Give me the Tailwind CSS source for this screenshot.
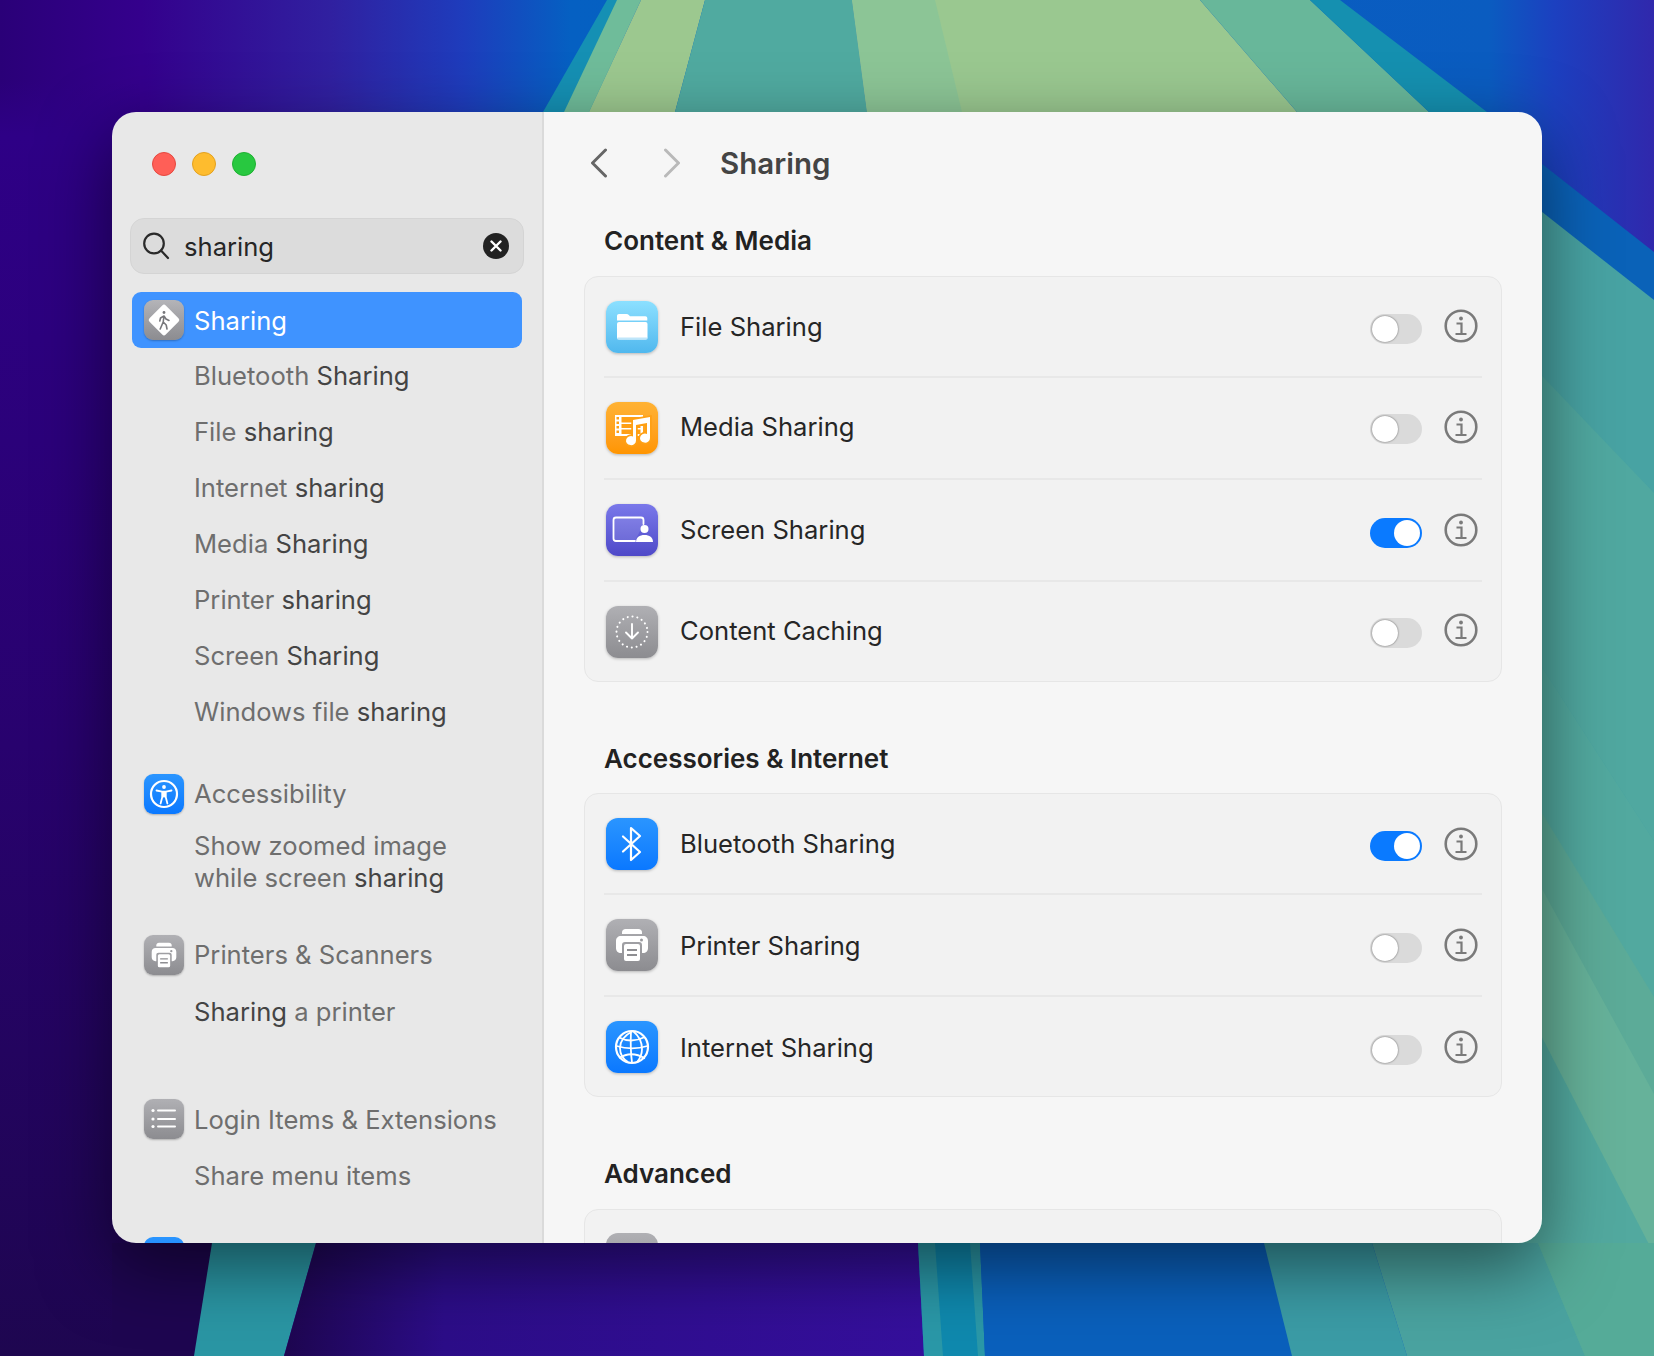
<!DOCTYPE html>
<html lang="en">
<head>
  <meta charset="UTF-8" />
  <title>Sharing</title>
  <script src="https://cdn.jsdelivr.net/npm/@tailwindcss/browser@4"></script>
</head>
<body class="font-['Inter','Noto_Sans',sans-serif] antialiased">
  <div class="relative w-[1654px] h-[1356px] overflow-hidden pt-[112px] pl-[112px]">

    <!-- wallpaper -->
    <svg class="absolute inset-0" width="1654" height="1356" viewBox="0 0 1654 1356">
      <defs>
        <linearGradient id="sky" x1="0" y1="0" x2="1" y2="0">
          <stop offset="0" stop-color="#2a0078"/>
          <stop offset=".085" stop-color="#34008c"/>
          <stop offset=".2" stop-color="#3020a0"/>
          <stop offset=".28" stop-color="#1e3cbc"/>
          <stop offset=".345" stop-color="#0560c2"/>
          <stop offset=".9" stop-color="#0a5cc0"/>
          <stop offset=".94" stop-color="#1c40c0"/>
          <stop offset="1" stop-color="#3028ac"/>
        </linearGradient>
        <linearGradient id="left" x1="0" y1="0" x2="0" y2="1">
          <stop offset=".06" stop-color="#2e0086" stop-opacity="0"/>
          <stop offset=".1" stop-color="#2e0086"/>
          <stop offset=".55" stop-color="#28026e"/>
          <stop offset="1" stop-color="#1e0650"/>
        </linearGradient>
        <linearGradient id="purple" x1="0" y1="0" x2="1" y2="0">
          <stop offset="0" stop-color="#1e0650"/>
          <stop offset=".25" stop-color="#2c0d88"/>
          <stop offset="1" stop-color="#350f9c"/>
        </linearGradient>
      </defs>
      <rect width="1654" height="1356" fill="url(#sky)"/>
      <rect width="140" height="1356" fill="url(#left)"/>
      <rect x="112" y="1243" width="104" height="113" fill="#1e0650"/>

      <!-- top ribbons -->
      <polygon points="607,0 640,0 590,112 543,112" fill="#1590b4"/>
      <polygon points="617,0 641,0 589,112 564,112" fill="#6fbc9a"/>
      <polygon points="641,0 705,0 675,112 589,112" fill="#9cc88f"/>
      <polygon points="705,0 852,0 867,112 675,112" fill="#50aaa0"/>
      <polygon points="852,0 1200,0 1297,112 867,112" fill="#9ac890"/>
      <polygon points="852,0 935,0 962,112 867,112" fill="#8cc596"/>
      <polygon points="1200,0 1310,0 1429,112 1297,112" fill="#68b79a"/>
      <polygon points="1310,0 1340,0 1487,112 1429,112" fill="#1590b0"/>

      <!-- right side -->
      <polygon points="1500,131 1654,252 1654,1356 1500,1356" fill="#0a62b8"/>
      <polygon points="1500,179 1654,300 1654,1356 1500,1356" fill="#48a3a3"/>
      <polygon points="1500,332 1654,493 1654,1356 1500,1356" fill="#50a8a0"/>
      <polygon points="1500,602 1654,841 1654,1356 1500,1356" fill="#48a3a3"/>
      <polygon points="1500,602 1654,841 1654,1000 1500,748" fill="#52a99f"/>
      <polygon points="1500,744 1654,997 1654,1356 1500,1356" fill="#5cab98"/>
      <polygon points="1500,812 1654,1094 1654,1356 1500,1356" fill="#66b29a"/>
      <polygon points="1500,956 1654,1254 1654,1356 1500,1356" fill="#52a99f"/>

      <!-- bottom ribbons -->
      <polygon points="212,1243 316,1243 284,1356 194,1356" fill="#2a96a4"/>
      <polygon points="316,1243 918,1243 924,1356 284,1356" fill="url(#purple)"/>
      <polygon points="918,1243 980,1243 985,1356 924,1356" fill="#2a98a8"/>
      <polygon points="935,1243 970,1243 978,1356 943,1356" fill="#0f89ae"/>
      <polygon points="980,1243 1264,1243 1292,1356 985,1356" fill="#0a60bc"/>
      <polygon points="1264,1243 1372,1243 1407,1356 1292,1356" fill="#3b9ca6"/>
      <polygon points="1372,1243 1538,1243 1585,1356 1407,1356" fill="#4aa3a0"/>
      <polygon points="1538,1243 1654,1243 1654,1356 1585,1356" fill="#55ab98"/>
    </svg>

    <!-- window -->
    <div class="relative w-[1430px] h-[1131px] rounded-[24px] overflow-hidden flex shadow-[0_24px_70px_rgba(0,0,0,0.5)]">

      <!-- sidebar -->
      <aside class="w-[432px] shrink-0 h-full bg-[#e8e8e8] border-r-2 border-[#dadada] overflow-hidden">
        <div class="flex gap-[16px] pt-[40px] pl-[40px]">
          <span class="w-[24px] h-[24px] rounded-full bg-[#ff5f57] border border-[#e5483f]"></span>
          <span class="w-[24px] h-[24px] rounded-full bg-[#febc2e] border border-[#e3a11f]"></span>
          <span class="w-[24px] h-[24px] rounded-full bg-[#28c840] border border-[#1fb032]"></span>
        </div>

        <div class="mt-[42px] ml-[18px] w-[394px] h-[56px] rounded-[14px] bg-[#dcdcdc] border border-[#d4d4d4] flex items-center pl-[11px] pr-[14px]">
          <svg width="28" height="28" viewBox="0 0 28 28" fill="none" stroke="#2a2a2a" stroke-width="2.2" stroke-linecap="round">
            <circle cx="12" cy="11.5" r="9.8"/><path d="M19 18.5l7 7.5"/>
          </svg>
          <span class="ml-[14px] mt-[2px] text-[25.6px] leading-[32px] text-[#262626]">sharing</span>
          <span class="ml-auto w-[26px] h-[26px] rounded-full bg-[#222] flex items-center justify-center">
            <svg width="12" height="12" viewBox="0 0 12 12" stroke="#fff" stroke-width="2.4" stroke-linecap="round"><path d="M1.5 1.5l9 9M10.5 1.5l-9 9"/></svg>
          </span>
        </div>

        <div class="mt-[18px] mx-[20px] h-[56px] w-[390px] rounded-[9px] bg-[#3f93ff] flex items-center pl-[12px] text-[25.6px] text-white">
          <div class="w-[40px] h-[40px] rounded-[9px] bg-linear-to-b from-[#b4b4b8] to-[#8c8c90] shadow-[0_1px_2px_rgba(0,0,0,0.25)]">
            <svg width="40" height="40" viewBox="0 0 40 40">
              <rect x="8.5" y="8.5" width="23" height="23" rx="2.5" fill="#fff" transform="rotate(45 20 20)"/>
              <g stroke="#77777b" stroke-width="1.6" fill="none" stroke-linecap="round" stroke-linejoin="round">
                <circle cx="20" cy="12.5" r="1.4" fill="#77777b" stroke="none"/>
                <path d="M20 16l-.8 6 3 3 .8 4M19.2 22l-3 7M20 16l-3.5 2-.7 3M20 16l2 3 3 1.5"/>
              </g>
            </svg>
          </div>
          <span class="ml-[10px] mt-[2px]">Sharing</span>
        </div>

        <div class="ml-[82px] text-[25.6px] text-[#6e6e6e]">
          <div class="h-[56px] leading-[56px]">Bluetooth <span class="text-[#444]">Sharing</span></div>
          <div class="h-[56px] leading-[56px]">File <span class="text-[#444]">sharing</span></div>
          <div class="h-[56px] leading-[56px]">Internet <span class="text-[#444]">sharing</span></div>
          <div class="h-[56px] leading-[56px]">Media <span class="text-[#444]">Sharing</span></div>
          <div class="h-[56px] leading-[56px]">Printer <span class="text-[#444]">sharing</span></div>
          <div class="h-[56px] leading-[56px]">Screen <span class="text-[#444]">Sharing</span></div>
          <div class="h-[56px] leading-[56px]">Windows file <span class="text-[#444]">sharing</span></div>
        </div>

        <div class="mt-[34px] ml-[32px] flex items-center gap-[10px] h-[40px] text-[25.6px] text-[#6e6e6e]">
          <div class="w-[40px] h-[40px] rounded-[9px] bg-linear-to-b from-[#2a95ff] to-[#0a78ff] shadow-[0_1px_2px_rgba(0,0,0,0.25)]">
            <svg width="40" height="40" viewBox="0 0 40 40" fill="none" stroke="#fff" stroke-linecap="round" stroke-linejoin="round">
              <circle cx="20" cy="20" r="13" stroke-width="2.2"/>
              <circle cx="20" cy="13" r="1.9" fill="#fff" stroke="none"/>
              <path d="M12.5 16.5l5.5 1.2h4l5.5-1.2M20 17.7v5M18.2 18v5.3l-1.6 6.2M21.8 18v5.3l1.6 6.2" stroke-width="1.8"/>
            </svg>
          </div>
          <span>Accessibility</span>
        </div>
        <div class="mt-[16px] ml-[82px] text-[25.6px] leading-[32px] text-[#6e6e6e]">
          Show zoomed image<br>while screen <span class="text-[#444]">sharing</span>
        </div>

        <div class="mt-[41px] ml-[32px] flex items-center gap-[10px] h-[40px] text-[25.6px] text-[#6e6e6e]">
          <div class="w-[40px] h-[40px] rounded-[9px] bg-linear-to-b from-[#b0b0b4] to-[#8c8c90] shadow-[0_1px_2px_rgba(0,0,0,0.25)]">
            <svg width="40" height="40" viewBox="0 0 52 52">
              <path d="M16 15v-1.5c0-2 1.5-3.5 3.5-3.5h13c2 0 3.5 1.5 3.500 3.500V15z" fill="#fff"/>
              <path d="M15 17h22c3 0 5 2 5 5v7c0 3-2 5-5 5h-1v-8c0-2-1-3-3-3H19c-2 0-3 1-3 3v8h-1c-3 0-5-2-5-5v-7c0-3 2-5 5-5z" fill="#fff"/>
              <circle cx="35.5" cy="21" r="1.5" fill="#9a9a9e"/>
              <rect x="18" y="25" width="16" height="17" rx="2" fill="#fff"/>
              <path d="M21 31h10M21 36h10" stroke="#8e8e92" stroke-width="1.8"/>
            </svg>
          </div>
          <span class="mt-[1px]">Printers &amp; Scanners</span>
        </div>
        <div class="mt-[9px] ml-[82px] h-[56px] leading-[56px] text-[25.6px] text-[#6e6e6e]"><span class="text-[#444]">Sharing</span> a printer</div>

        <div class="mt-[59px] ml-[32px] flex items-center gap-[10px] h-[40px] text-[25.6px] text-[#6e6e6e]">
          <div class="w-[40px] h-[40px] rounded-[9px] bg-linear-to-b from-[#b0b0b4] to-[#8c8c90] shadow-[0_1px_2px_rgba(0,0,0,0.25)]">
            <svg width="40" height="40" viewBox="0 0 40 40" fill="#fff">
              <circle cx="9" cy="11.5" r="1.6"/><circle cx="9" cy="20" r="1.6"/><circle cx="9" cy="27.5" r="1.6"/>
              <rect x="13" y="10.5" width="19" height="2" rx="1"/><rect x="13" y="19" width="19" height="2" rx="1"/><rect x="13" y="26.5" width="19" height="2" rx="1"/>
            </svg>
          </div>
          <span class="mt-[2px]">Login Items &amp; Extensions</span>
        </div>
        <div class="mt-[9px] ml-[82px] h-[56px] leading-[56px] text-[25.6px] text-[#6e6e6e]">Share menu items</div>
        <div class="mt-[33px] ml-[32px] w-[40px] h-[40px] rounded-[9px] bg-linear-to-b from-[#2a95ff] to-[#0a78ff]"></div>
      </aside>

      <!-- content -->
      <main class="flex-1 min-w-0 h-full bg-[#f6f6f6] overflow-hidden pl-[40px]">
        <div class="h-[113px] pt-[34px]">
          <div class="h-[34px] flex items-center">
            <svg class="ml-[6px]" width="18" height="30" viewBox="0 0 18 30" fill="none" stroke="#666" stroke-width="3" stroke-linecap="round" stroke-linejoin="round"><path d="M15.5 2L2.5 15l13 13"/></svg>
            <svg class="ml-[55px]" width="18" height="30" viewBox="0 0 18 30" fill="none" stroke="#b9b9b9" stroke-width="3" stroke-linecap="round" stroke-linejoin="round"><path d="M2.5 2l13 13-13 13"/></svg>
            <h1 class="ml-[39px] text-[29.5px] font-semibold text-[#444]">Sharing</h1>
          </div>
        </div>

        <h2 class="ml-[20px] h-[32px] leading-[32px] text-[26px] font-semibold text-[#222]">Content &amp; Media</h2>
        <div class="mt-[19px] w-[918px] rounded-[14px] bg-[#f2f2f2] border border-[#e6e6e6] text-[25.6px] text-[#262626]">
          <!-- file sharing -->
          <div class="h-[99px] flex items-center pl-[21px] pr-[23px]">
            <div class="w-[52px] h-[52px] rounded-[12px] bg-linear-to-b from-[#8ce0ff] to-[#50b8ee] shadow-[0_1px_3px_rgba(0,0,0,0.25)]">
              <svg width="52" height="52" viewBox="0 0 52 52">
                <path d="M11 19.5V15c0-1.2.8-2 2-2h7.500c1 0 1.700.4 2.300 1l1.200 1.200h15.300c1.200 0 2 .8 2 2v2.300z" fill="#fff"/>
                <rect x="11" y="21" width="30.5" height="17.5" rx="2" fill="#fff"/>
                <rect x="11" y="36.5" width="30.5" height="2" rx="1" fill="#bfe6fa"/>
              </svg>
            </div>
            <span class="ml-[22px] mt-[2px]">File Sharing</span>
            <div class="ml-auto mt-[4px] w-[52px] h-[30px] rounded-full bg-[#dadada] p-[2px] flex"><span class="w-[26px] h-[26px] rounded-full bg-white shadow-[0_0_2px_rgba(0,0,0,0.6)]"></span></div>
            <svg class="ml-[22px] -mt-[1px]" width="34" height="34" viewBox="0 0 34 34" fill="none" stroke="#7a7a7a"><circle cx="17" cy="17" r="15.3" stroke-width="2.600"/><circle cx="17" cy="9.500" r="1.900" fill="#7a7a7a" stroke="none"/><path d="M12.500 14.500h5v10M11.500 25h11" stroke-width="2.200"/></svg>
          </div>
          <div class="h-[2px] mx-[19px] bg-[#e8e8e8]"></div>
          <!-- media sharing -->
          <div class="h-[100px] flex items-center pl-[21px] pr-[23px]">
            <div class="w-[52px] h-[52px] rounded-[12px] bg-linear-to-b from-[#ffb233] to-[#ff9500] shadow-[0_1px_3px_rgba(0,0,0,0.25)]">
              <svg width="52" height="52" viewBox="0 0 52 52">
                <path d="M9 13h28v21H9z" fill="#fff"/>
                <g fill="#ff9f14">
                  <rect x="10.5" y="15" width="2.5" height="2.500"/><rect x="10.5" y="19.500" width="2.500" height="2.500"/><rect x="10.5" y="24" width="2.500" height="2.500"/><rect x="10.5" y="28.500" width="2.500" height="2.500"/>
                  <rect x="15.5" y="15" width="19" height="5.500"/><rect x="15.5" y="22" width="19" height="4"/><rect x="15.5" y="27.5" width="19" height="4.500"/>
                </g>
                <path d="M27 18l17-3v21a5 4.500 0 1 1-3-4V21l-11 2v15.500a5 4.500 0 1 1-3-4z" fill="#ffa014" stroke="#ffa014" stroke-width="3.500"/>
                <path d="M27 18l17-3v21a5 4.500 0 1 1-3-4V21l-11 2v15.500a5 4.500 0 1 1-3-4z" fill="#fff"/>
              </svg>
            </div>
            <span class="ml-[22px] mb-[2px]">Media Sharing</span>
            <div class="ml-auto mt-[2px] w-[52px] h-[30px] rounded-full bg-[#dadada] p-[2px] flex"><span class="w-[26px] h-[26px] rounded-full bg-white shadow-[0_0_2px_rgba(0,0,0,0.6)]"></span></div>
            <svg class="ml-[22px] -mt-[3px]" width="34" height="34" viewBox="0 0 34 34" fill="none" stroke="#7a7a7a"><circle cx="17" cy="17" r="15.3" stroke-width="2.600"/><circle cx="17" cy="9.500" r="1.900" fill="#7a7a7a" stroke="none"/><path d="M12.500 14.500h5v10M11.500 25h11" stroke-width="2.200"/></svg>
          </div>
          <div class="h-[2px] mx-[19px] bg-[#e8e8e8]"></div>
          <!-- screen sharing -->
          <div class="h-[100px] flex items-center pl-[21px] pr-[23px]">
            <div class="w-[52px] h-[52px] rounded-[12px] bg-linear-to-b from-[#7a78ea] to-[#4f49c8] shadow-[0_1px_3px_rgba(0,0,0,0.25)]">
              <svg width="52" height="52" viewBox="0 0 52 52">
                <path d="M29 37H10c-1.500 0-2.500-1-2.500-2.500V16c0-1.500 1-2.500 2.500-2.500h25c1.500 0 2.500 1 2.500 2.500v4" fill="#fff" fill-opacity=".12" stroke="#fff" stroke-width="1.800" stroke-linecap="round"/>
                <circle cx="38.5" cy="25" r="4" fill="#fff"/>
                <path d="M30 38c0-4.500 3.500-7 8.500-7s8.500 2.500 8.500 7z" fill="#fff"/>
              </svg>
            </div>
            <span class="ml-[22px]">Screen Sharing</span>
            <div class="ml-auto mt-[6px] w-[52px] h-[30px] rounded-full bg-[#0a7aff] p-[2px] flex justify-end"><span class="w-[26px] h-[26px] rounded-full bg-white"></span></div>
            <svg class="ml-[22px] -mt-[1px]" width="34" height="34" viewBox="0 0 34 34" fill="none" stroke="#7a7a7a"><circle cx="17" cy="17" r="15.3" stroke-width="2.600"/><circle cx="17" cy="9.500" r="1.900" fill="#7a7a7a" stroke="none"/><path d="M12.500 14.500h5v10M11.500 25h11" stroke-width="2.200"/></svg>
          </div>
          <div class="h-[2px] mx-[19px] bg-[#e8e8e8]"></div>
          <!-- content caching -->
          <div class="h-[99px] flex items-center pl-[21px] pr-[23px]">
            <div class="w-[52px] h-[52px] rounded-[12px] bg-linear-to-b from-[#b0b0b4] to-[#8c8c90] shadow-[0_1px_3px_rgba(0,0,0,0.25)]">
              <svg width="52" height="52" viewBox="0 0 52 52" fill="none" stroke="#fff" stroke-linecap="round" stroke-linejoin="round">
                <circle cx="26" cy="26" r="15.5" stroke-width="2" stroke-dasharray="0.1 4.77"/>
                <path d="M26 18v14.5M20 26.5l6 6 6-6" stroke-width="1.9"/>
              </svg>
            </div>
            <span class="ml-[22px]">Content Caching</span>
            <div class="ml-auto mt-[2px] w-[52px] h-[30px] rounded-full bg-[#dadada] p-[2px] flex"><span class="w-[26px] h-[26px] rounded-full bg-white shadow-[0_0_2px_rgba(0,0,0,0.6)]"></span></div>
            <svg class="ml-[22px] -mt-[3px]" width="34" height="34" viewBox="0 0 34 34" fill="none" stroke="#7a7a7a"><circle cx="17" cy="17" r="15.3" stroke-width="2.600"/><circle cx="17" cy="9.500" r="1.900" fill="#7a7a7a" stroke="none"/><path d="M12.500 14.500h5v10M11.500 25h11" stroke-width="2.200"/></svg>
          </div>
        </div>

        <h2 class="mt-[61px] ml-[20px] h-[32px] leading-[32px] text-[26px] font-semibold text-[#222]">Accessories &amp; Internet</h2>
        <div class="mt-[18px] w-[918px] rounded-[14px] bg-[#f2f2f2] border border-[#e6e6e6] text-[25.6px] text-[#262626]">
          <!-- bluetooth -->
          <div class="h-[99px] flex items-center pl-[21px] pr-[23px]">
            <div class="w-[52px] h-[52px] rounded-[12px] bg-linear-to-b from-[#2a95ff] to-[#0a78ff] shadow-[0_1px_3px_rgba(0,0,0,0.25)]">
              <svg width="52" height="52" viewBox="0 0 52 52" fill="none" stroke="#fff" stroke-width="2.2" stroke-linecap="round" stroke-linejoin="round">
                <path d="M17 18.5L34 34l-9 8V10l9 8-17 15.5"/>
              </svg>
            </div>
            <span class="ml-[22px] mt-[2px]">Bluetooth Sharing</span>
            <div class="ml-auto mt-[4px] w-[52px] h-[30px] rounded-full bg-[#0a7aff] p-[2px] flex justify-end"><span class="w-[26px] h-[26px] rounded-full bg-white"></span></div>
            <svg class="ml-[22px]" width="34" height="34" viewBox="0 0 34 34" fill="none" stroke="#7a7a7a"><circle cx="17" cy="17" r="15.3" stroke-width="2.600"/><circle cx="17" cy="9.500" r="1.900" fill="#7a7a7a" stroke="none"/><path d="M12.500 14.500h5v10M11.500 25h11" stroke-width="2.200"/></svg>
          </div>
          <div class="h-[2px] mx-[19px] bg-[#e8e8e8]"></div>
          <!-- printer -->
          <div class="h-[100px] flex items-center pl-[21px] pr-[23px]">
            <div class="w-[52px] h-[52px] rounded-[12px] bg-linear-to-b from-[#b0b0b4] to-[#8c8c90] shadow-[0_1px_3px_rgba(0,0,0,0.25)]">
              <svg width="52" height="52" viewBox="0 0 52 52">
                <path d="M16 15v-1.5c0-2 1.5-3.5 3.5-3.5h13c2 0 3.5 1.5 3.5 3.5V15z" fill="#fff"/>
                <path d="M15 17h22c3 0 5 2 5 5v7c0 3-2 5-5 5h-1v-8c0-2-1-3-3-3H19c-2 0-3 1-3 3v8h-1c-3 0-5-2-5-5v-7c0-3 2-5 5-5z" fill="#fff"/>
                <circle cx="35.5" cy="21" r="1.5" fill="#9a9a9e"/>
                <rect x="18" y="25" width="16" height="17" rx="2" fill="#fff"/>
                <path d="M21 31h10M21 36h10" stroke="#8e8e92" stroke-width="1.8"/>
              </svg>
            </div>
            <span class="ml-[22px] mt-[2px]">Printer Sharing</span>
            <div class="ml-auto mt-[5px] w-[52px] h-[30px] rounded-full bg-[#dadada] p-[2px] flex"><span class="w-[26px] h-[26px] rounded-full bg-white shadow-[0_0_2px_rgba(0,0,0,0.6)]"></span></div>
            <svg class="ml-[22px]" width="34" height="34" viewBox="0 0 34 34" fill="none" stroke="#7a7a7a"><circle cx="17" cy="17" r="15.3" stroke-width="2.600"/><circle cx="17" cy="9.500" r="1.900" fill="#7a7a7a" stroke="none"/><path d="M12.500 14.500h5v10M11.500 25h11" stroke-width="2.200"/></svg>
          </div>
          <div class="h-[2px] mx-[19px] bg-[#e8e8e8]"></div>
          <!-- internet -->
          <div class="h-[99px] flex items-center pl-[21px] pr-[23px]">
            <div class="w-[52px] h-[52px] rounded-[12px] bg-linear-to-b from-[#2a95ff] to-[#0a78ff] shadow-[0_1px_3px_rgba(0,0,0,0.25)]">
              <svg width="52" height="52" viewBox="0 0 52 52" fill="none" stroke="#fff" stroke-width="1.8">
                <circle cx="26" cy="26" r="16" stroke-width="2.2"/>
                <path d="M27 10c-8 4-13 10-13 17s3 11 8 14M27 10c6 5 9 11 9 18 0 5-1.500 9-5 13M25 10.500c-.5 10-.5 20 1 31"/>
                <path d="M13 16.500c8 4 17 4 26-.5M10.500 25c10 3 21 3 31 0M13 37c8-5 17-5 26 .5"/>
              </svg>
            </div>
            <span class="ml-[22px] mt-[4px]">Internet Sharing</span>
            <div class="ml-auto mt-[6px] w-[52px] h-[30px] rounded-full bg-[#dadada] p-[2px] flex"><span class="w-[26px] h-[26px] rounded-full bg-white shadow-[0_0_2px_rgba(0,0,0,0.6)]"></span></div>
            <svg class="ml-[22px]" width="34" height="34" viewBox="0 0 34 34" fill="none" stroke="#7a7a7a"><circle cx="17" cy="17" r="15.3" stroke-width="2.600"/><circle cx="17" cy="9.500" r="1.900" fill="#7a7a7a" stroke="none"/><path d="M12.500 14.500h5v10M11.500 25h11" stroke-width="2.200"/></svg>
          </div>
        </div>

        <h2 class="mt-[61px] ml-[20px] h-[32px] leading-[32px] text-[26px] font-semibold text-[#222]">Advanced</h2>
        <div class="mt-[19px] w-[918px] h-[120px] rounded-[14px] bg-[#f2f2f2] border border-[#e6e6e6] pt-[23px] pl-[21px]">
          <div class="w-[52px] h-[52px] rounded-[12px] bg-linear-to-b from-[#b0b0b4] to-[#8c8c90]"></div>
        </div>
      </main>
    </div>
  </div>
</body>
</html>
